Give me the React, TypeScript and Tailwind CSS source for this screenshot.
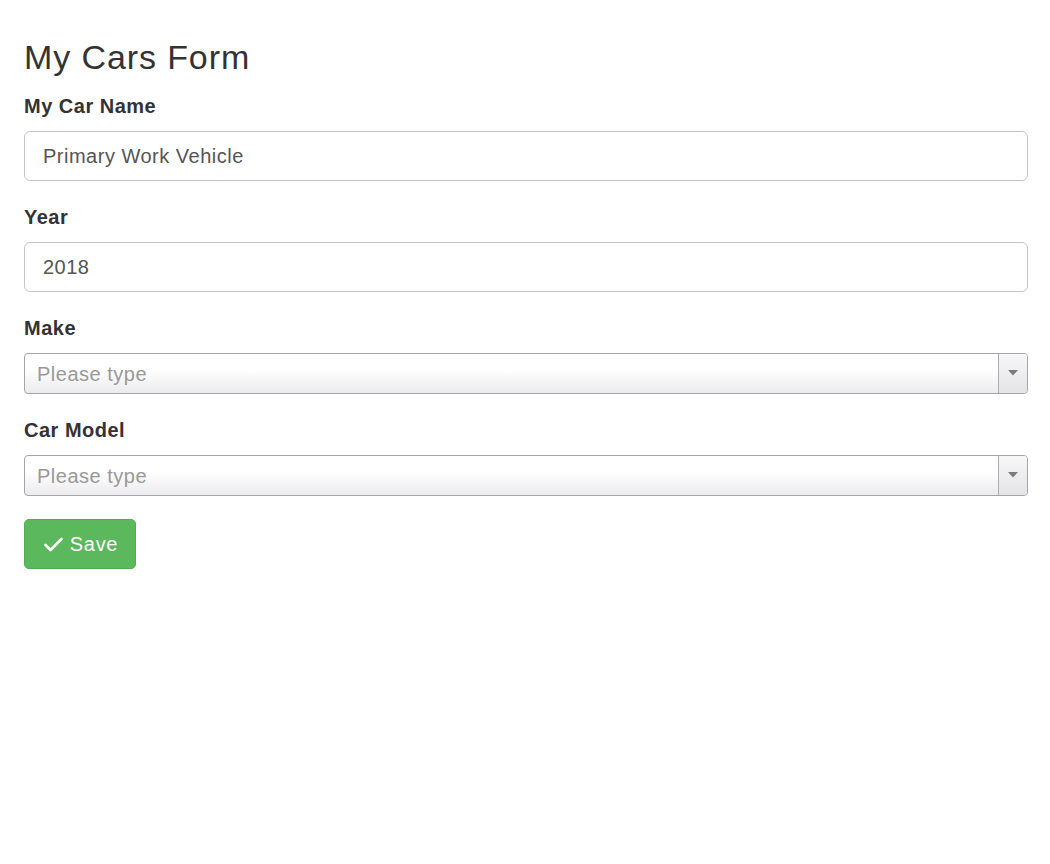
import { useState } from 'react'

const font = { fontFamily: '"Liberation Sans", Arial, sans-serif' }

function Caret() {
  return (
    <svg width="10" height="6" viewBox="0 0 10 6" aria-hidden="true">
      <path d="M0 0h10L5 5.5z" fill="#7a7a7a" />
    </svg>
  )
}

function ComboBox({ placeholder }: { placeholder: string }) {
  const [value, setValue] = useState('')
  return (
    <div className="flex h-[41px] w-full overflow-hidden rounded-[4px] border border-[#a5a5a8] bg-gradient-to-b from-white from-40% to-[#ebebee]">
      <input
        value={value}
        onChange={(e) => setValue(e.target.value)}
        placeholder={placeholder}
        className="min-w-0 flex-1 bg-transparent px-[12px] text-[20px] tracking-[0.5px] text-[#555] outline-none placeholder:text-[#999]"
      />
      <span className="flex w-[29px] shrink-0 items-center justify-center border-l border-[#adadb0] bg-gradient-to-b from-[#f7f7f8] to-[#e4e4e7] pb-[1px]">
        <Caret />
      </span>
    </div>
  )
}

function Label({ children }: { children: React.ReactNode }) {
  return <label className="mb-[13px] block text-[20px] font-bold leading-[24px] tracking-[0.5px] text-[#333]">{children}</label>
}

export default function App() {
  const [name, setName] = useState('Primary Work Vehicle')
  const [year, setYear] = useState('2018')

  return (
    <div className="min-h-[864px] bg-white pl-[24px] pr-[22px] pt-[38px]" style={font}>
      <h1 className="mb-[18px] text-[34px] font-normal leading-[38px] tracking-[0.9px] text-[#333]">My Cars Form</h1>
      <form onSubmit={(e) => e.preventDefault()}>
        <div className="mb-[24px]">
          <Label>My Car Name</Label>
          <input
            value={name}
            onChange={(e) => setName(e.target.value)}
            className="block h-[50px] w-full rounded-[6px] border border-[#c6c6c9] bg-white px-[18px] text-[20px] tracking-[0.5px] text-[#555] outline-none"
          />
        </div>
        <div className="mb-[24px]">
          <Label>Year</Label>
          <input
            value={year}
            onChange={(e) => setYear(e.target.value)}
            className="block h-[50px] w-full rounded-[6px] border border-[#c6c6c9] bg-white px-[18px] text-[20px] tracking-[0.5px] text-[#555] outline-none"
          />
        </div>
        <div className="mb-[24px]">
          <Label>Make</Label>
          <ComboBox placeholder="Please type" />
        </div>
        <div className="mb-[23px]">
          <Label>Car Model</Label>
          <ComboBox placeholder="Please type" />
        </div>
        <button
          type="submit"
          className="flex h-[50px] w-[112px] items-center justify-center gap-[7px] rounded-[5px] border border-[#4cae4c] bg-[#5cb85c] pl-[2px] text-[20px] tracking-[0.7px] text-white hover:bg-[#449d44]"
        >
          <svg width="19" height="15" viewBox="0 0 19 15" aria-hidden="true">
            <path d="M1.5 8l5 5L17.5 2" fill="none" stroke="white" strokeWidth="2.6" strokeLinecap="round" strokeLinejoin="round" />
          </svg>
          Save
        </button>
      </form>
    </div>
  )
}
